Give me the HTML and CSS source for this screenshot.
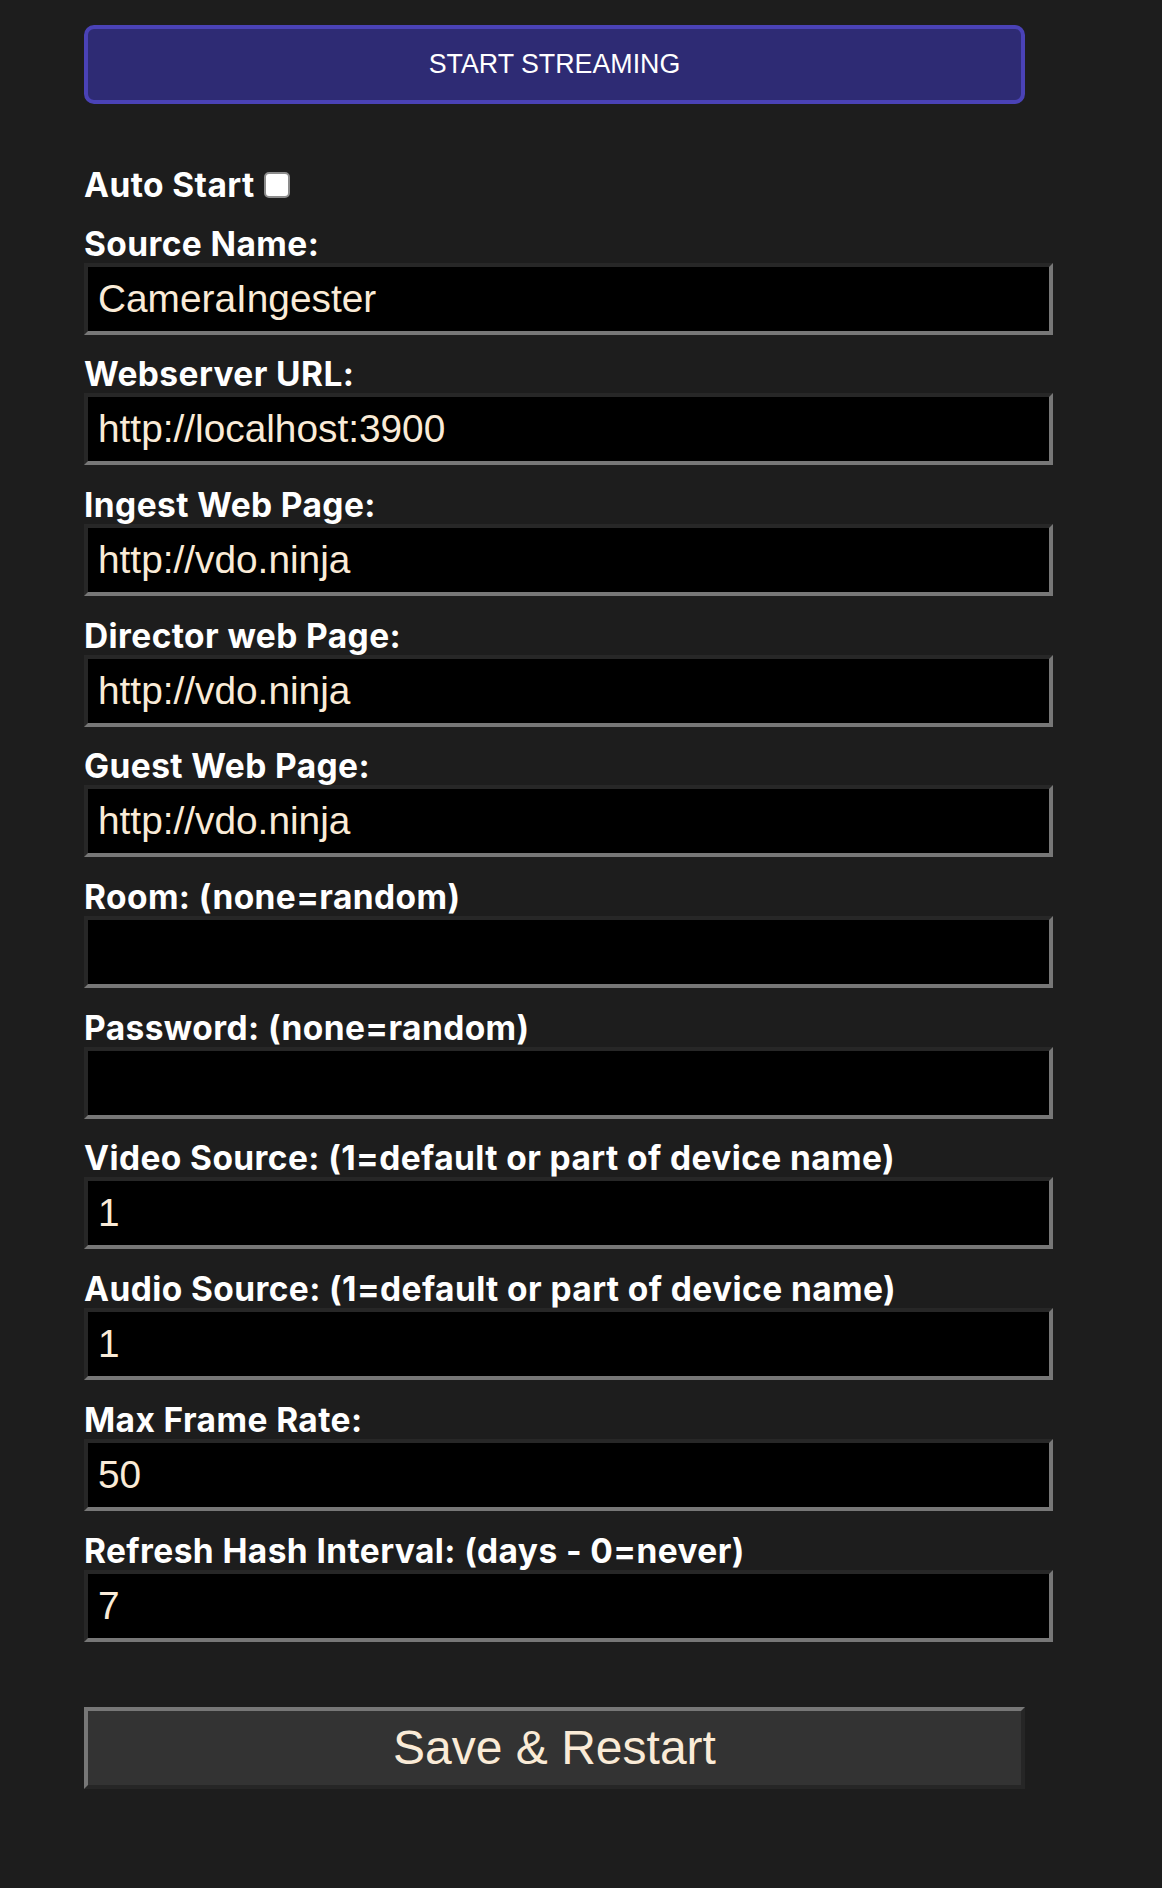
FILE: index.html
```html
<!DOCTYPE html>
<html lang="en">
<head>
<meta charset="utf-8">
<title>Camera Ingester Settings</title>
<link rel="stylesheet" href="styles.css">
</head>
<body>
<div class="panel">
  <button class="start" type="button">START STREAMING</button>
  <form class="settings">
    <label class="auto">Auto Start <input class="check" type="checkbox"></label>
    <label class="lbl" for="f1">Source Name:</label>
    <input class="txt" id="f1" type="text" value="CameraIngester">
    <label class="lbl" for="f2">Webserver URL:</label>
    <input class="txt" id="f2" type="text" value="http://localhost:3900">
    <label class="lbl" for="f3">Ingest Web Page:</label>
    <input class="txt" id="f3" type="text" value="http://vdo.ninja">
    <label class="lbl" for="f4">Director web Page:</label>
    <input class="txt" id="f4" type="text" value="http://vdo.ninja">
    <label class="lbl" for="f5">Guest Web Page:</label>
    <input class="txt" id="f5" type="text" value="http://vdo.ninja">
    <label class="lbl" for="f6">Room: (none=random)</label>
    <input class="txt" id="f6" type="text" value="">
    <label class="lbl" for="f7">Password: (none=random)</label>
    <input class="txt" id="f7" type="text" value="">
    <label class="lbl" for="f8">Video Source: (1=default or part of device name)</label>
    <input class="txt" id="f8" type="text" value="1">
    <label class="lbl" for="f9">Audio Source: (1=default or part of device name)</label>
    <input class="txt" id="f9" type="text" value="1">
    <label class="lbl" for="f10">Max Frame Rate:</label>
    <input class="txt" id="f10" type="text" value="50">
    <label class="lbl" for="f11">Refresh Hash Interval: (days - 0=never)</label>
    <input class="txt" id="f11" type="text" value="7">
    <button class="save" type="button">Save &amp; Restart</button>
  </form>
</div>
</body>
</html>
```
FILE: styles.css
```css
html, body {
  margin: 0;
  padding: 0;
  background: #1d1d1d;
}

.panel {
  padding: 25px 0 0 84px;
  width: 941px;
}

.start {
  display: block;
  box-sizing: border-box;
  width: 941px;
  height: 79px;
  margin: 0 0 41.3px 0;
  padding: 0;
  background: #2e2b74;
  border: 4px solid #4a42b6;
  border-radius: 10px;
  color: #ffffff;
  font-family: "Liberation Sans", Arial, sans-serif;
  font-size: 26.8px;
  letter-spacing: 0;
}

.settings {
  display: flex;
  flex-direction: column;
  align-items: flex-start;
}

.auto,
.lbl {
  font-family: Inter, "Noto Sans", sans-serif;
  font-weight: 700;
  font-size: 33.5px;
  letter-spacing: 0.4px;
  line-height: 38px;
  height: 38px;
  color: #ffffff;
  margin-top: 20.7px;
  white-space: nowrap;
}

.auto {
  display: flex;
  align-items: center;
  gap: 9px;
}

.check {
  appearance: none;
  -webkit-appearance: none;
  box-sizing: border-box;
  width: 26px;
  height: 26px;
  margin: 0;
  background: #ffffff;
  border: 2px solid #8c8c8c;
  border-radius: 5px;
}

.txt {
  display: block;
  box-sizing: border-box;
  width: 969px;
  height: 72px;
  margin: 0;
  padding: 0 10px;
  background: #000000;
  border-width: 4px;
  border-style: solid;
  border-color: #272727 #777777 #777777 #272727;
  color: #faebd7;
  font-family: "Liberation Sans", Arial, sans-serif;
  font-size: 38.8px;
  outline: none;
}

.save {
  display: block;
  box-sizing: border-box;
  width: 941px;
  height: 82px;
  margin-top: 65px;
  padding: 0;
  background: #333333;
  border-width: 4px;
  border-style: solid;
  border-color: #777777 #262626 #262626 #777777;
  color: #faebd7;
  font-family: "Liberation Sans", Arial, sans-serif;
  font-size: 48px;
}
```
